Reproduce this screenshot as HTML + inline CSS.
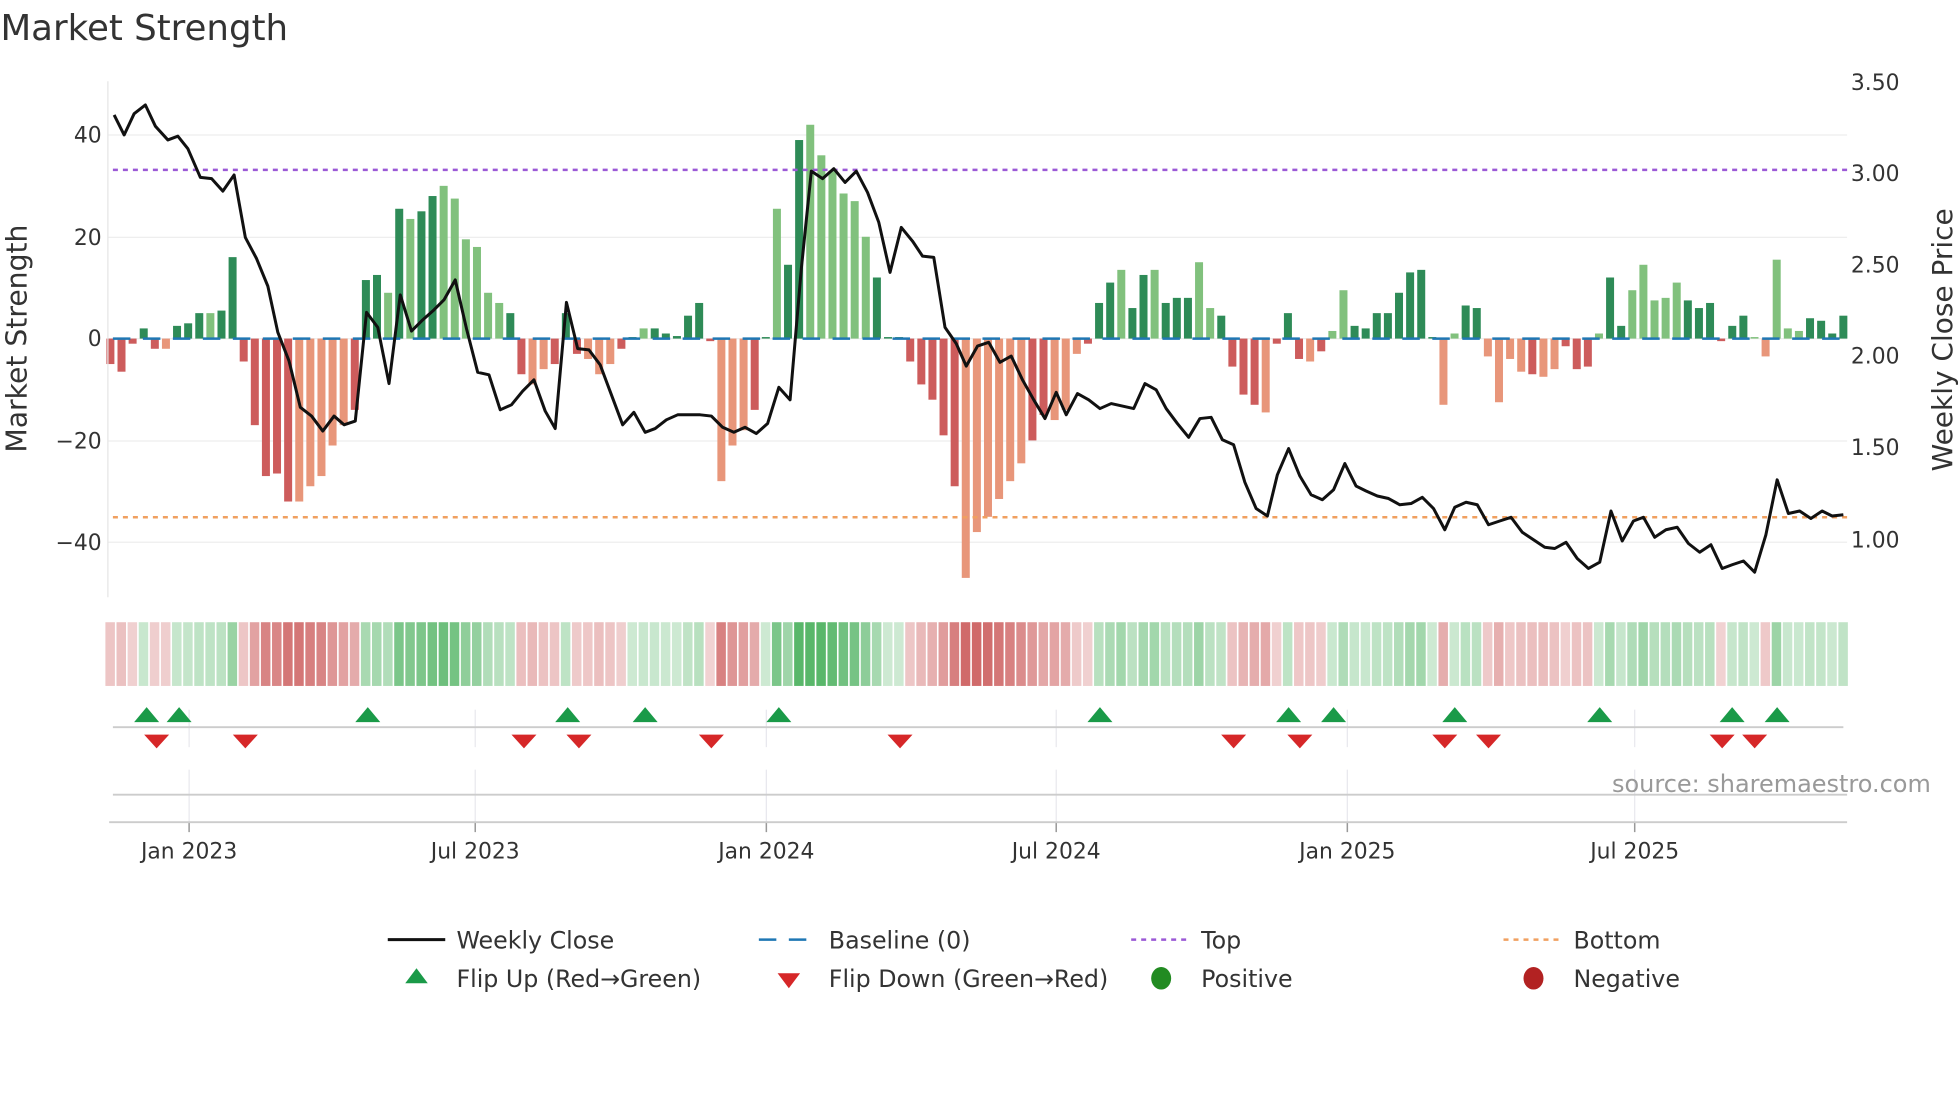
<!DOCTYPE html>
<html><head><meta charset="utf-8"><style>
html,body{margin:0;padding:0;background:#fff;overflow:hidden}
svg{display:block}
text{font-family:"DejaVu Sans","Liberation Sans",sans-serif;fill:#333}
</style></head><body>
<svg id="s" width="1960" height="1102" viewBox="0 0 1568 882" xmlns="http://www.w3.org/2000/svg">
<text x="0" y="32" font-size="28.5">Market Strength</text>
<g id="grid"></g>
<g id="bars"></g>
<line x1="90" y1="271" x2="1478" y2="271" stroke="#1f77b4" stroke-width="2" stroke-dasharray="14,10"/>
<line x1="90" y1="136" x2="1478" y2="136" stroke="#9b59d6" stroke-width="2" stroke-dasharray="4,4"/>
<line x1="90" y1="414" x2="1478" y2="414" stroke="#f0a060" stroke-width="2" stroke-dasharray="4,4"/>
<polyline id="price" fill="none" stroke="#111" stroke-width="2.4" stroke-linejoin="round"/>
<g id="heat"></g>
<g id="marks"></g>
<line x1="86" y1="65" x2="86" y2="478" stroke="#e6e6e6" stroke-width="1"/>
<g font-size="17.5" text-anchor="end">
<text x="81" y="114">40</text><text x="81" y="196">20</text><text x="81" y="277">0</text><text x="81" y="359">−20</text><text x="81" y="440">−40</text>
</g>
<g font-size="17.5">
<text x="1481" y="72">3.50</text><text x="1481" y="145">3.00</text><text x="1481" y="218">2.50</text><text x="1481" y="291">2.00</text><text x="1481" y="364">1.50</text><text x="1481" y="438">1.00</text>
</g>
<text transform="translate(21,271) rotate(-90)" font-size="22.6" text-anchor="middle">Market Strength</text>
<text transform="translate(1562,272) rotate(-90)" font-size="22.4" text-anchor="middle">Weekly Close Price</text>
<line x1="90" y1="582" x2="1475" y2="582" stroke="#ccc" stroke-width="1.5"/>
<line x1="90" y1="636" x2="1478" y2="636" stroke="#ccc" stroke-width="1.5"/>
<line x1="87" y1="658" x2="1478" y2="658" stroke="#ccc" stroke-width="1.5"/>
<g id="ticks" font-size="17.5" text-anchor="middle"></g>
<text x="1545" y="634" font-size="19.2" text-anchor="end" style="fill:#999">source: sharemaestro.com</text>
<g font-size="19">
<line x1="310" y1="752" x2="356" y2="752" stroke="#111" stroke-width="2.4"/><text x="365" y="759">Weekly Close</text>
<line x1="607" y1="752" x2="651" y2="752" stroke="#1f77b4" stroke-width="2" stroke-dasharray="14,10"/><text x="663" y="759">Baseline (0)</text>
<line x1="905" y1="752" x2="949" y2="752" stroke="#9b59d6" stroke-width="2" stroke-dasharray="4,4"/><text x="961" y="759">Top</text>
<line x1="1203" y1="752" x2="1247" y2="752" stroke="#f0a060" stroke-width="2" stroke-dasharray="4,4"/><text x="1259" y="759">Bottom</text>
<polygon points="324,787 342,787 333,775" fill="#1a9a48"/><text x="365" y="790">Flip Up (Red→Green)</text>
<polygon points="622,779 640,779 631,791" fill="#d62728"/><text x="663" y="790">Flip Down (Green→Red)</text>
<ellipse cx="929" cy="783" rx="8" ry="9" fill="#228b22"/><text x="961" y="790">Positive</text>
<ellipse cx="1227" cy="783" rx="8" ry="9" fill="#b22222"/><text x="1259" y="790">Negative</text>
</g>
</svg>
<script>
var NS="http://www.w3.org/2000/svg";
function el(t,a,p){var e=document.createElementNS(NS,t);for(var k in a)e.setAttribute(k,a[k]);document.getElementById(p).appendChild(e);return e;}
[108,190,271,353,434].forEach(function(y){el("line",{x1:86,y1:y,x2:1478,y2:y,stroke:"#eeeeee","stroke-width":1},"grid");});
var ticks=[[151,"Jan 2023"],[380,"Jul 2023"],[613,"Jan 2024"],[845,"Jul 2024"],[1078,"Jan 2025"],[1308,"Jul 2025"]];
ticks.forEach(function(t){
 el("line",{x1:t[0],y1:568,x2:t[0],y2:598,stroke:"#e8e8ee","stroke-width":1},"grid");
 el("line",{x1:t[0],y1:616,x2:t[0],y2:658,stroke:"#e8e8ee","stroke-width":1},"grid");
 el("line",{x1:t[0],y1:658,x2:t[0],y2:666,stroke:"#999","stroke-width":1.2},"grid");
 var tx=el("text",{x:t[0],y:687},"ticks");tx.textContent=t[1];
});
var v=[-5,-6.5,-1,2,-2,-2,2.5,3,5,5,5.5,16,-4.5,-17,-27,-26.5,-32,-32,-29,-27,-21,-17,-14,11.5,12.5,9,25.5,23.5,25,28,30,27.5,19.5,18,9,7,5,-7,-9,-6,-5,5,-3,-4,-7,-5,-2,0.3,2,2,1,0.5,4.5,7,-0.5,-28,-21,-18,-14,0.3,25.5,14.5,39,42,36,33,28.5,27,20,12,0.3,0.3,-4.5,-9,-12,-19,-29,-47,-38,-35,-31.5,-28,-24.5,-20,-15,-16,-14,-3,-1,7,11,13.5,6,12.5,13.5,7,8,8,15,6,4.5,-5.5,-11,-13,-14.5,-1,5,-4,-4.5,-2.5,1.5,9.5,2.5,2,5,5,9,13,13.5,0.3,-13,1,6.5,6,-3.5,-12.5,-4,-6.5,-7,-7.5,-6,-1.5,-6,-5.5,1,12,2.5,9.5,14.5,7.5,8,11,7.5,6,7,-0.5,2.5,4.5,0.3,-3.5,15.5,2,1.5,4,3.5,1,4.5];
var L="DDDDDLDDDLDDDDDDDLLLLLDDDLDLDDLLLLLLDDLLDDDLLLDDLDDDDDDLLLDDLDDLLLLLLDDDDDDDDLLLLLLDDLLLDDDLDDLDDDLLDDDDLDDDLDLLDDDDDDDDLLDDLLLLDLLDDDLDDLLLLLDDDDDDLLLLLD";
var n=v.length,dx=(1475-88)/(n-1);
for(var i=0;i<n;i++){
 var x=88+i*dx,val=v[i],lt=L[i]==="L",y0=271,h=val*4.075;
 var col=val>=0?(lt?"#81c17d":"#2e8b57"):(lt?"#e8967a":"#cd5c5c");
 el("rect",{x:x-3.2,y:val>=0?y0-h:y0,width:6.4,height:Math.abs(h),fill:col},"bars");
 var a=Math.min(0.85,0.25+Math.abs(val)/45*0.75);
 var hc=val>=0?"rgba(60,170,80,"+a+")":"rgba(200,80,80,"+a+")";
 el("rect",{x:x-4,y:498,width:7.6,height:51,fill:hc},"heat");
}
var p=[91,92,99,108,107,91,116,84,124,101,134,112,142,109,150,119,160,142,169,143,178,153,187,140,196,190,205,207,214,229,222,266,231,289,240,326,249,333,258,345,267,333,275,340,284,337,293,250,302,262,311,307,320,236,329,265,338,256,347,248,355,240,364,224,373,263,382,298,391,300,400,328,409,324,418,313,427,304,436,329,444,343,453,242,462,279,471,280,480,292,489,316,498,340,507,330,516,346,524,343,533,336,542,332,551,332,560,332,569,333,578,342,587,346,596,342,605,347,614,339,623,310,632,320,641,215,649,137,658,143,667,135,676,146,685,137,694,154,703,178,712,218,721,182,730,193,738,205,747,206,756,262,765,275,773,293,782,277,791,274,800,290,809,285,818,304,827,320,836,335,845,314,853,332,862,315,871,320,880,327,889,323,898,325,907,327,916,307,925,312,933,327,942,339,951,350,960,335,969,334,978,352,987,356,996,386,1005,407,1014,413,1022,380,1031,359,1040,381,1049,396,1058,400,1067,392,1076,371,1085,389,1093,393,1102,397,1111,399,1120,404,1129,403,1138,398,1147,407,1156,424,1164,406,1173,402,1182,404,1191,420,1200,417,1209,414,1218,426,1227,432,1236,438,1244,439,1253,434,1262,447,1271,455,1280,450,1289,409,1298,433,1307,417,1315,414,1324,430,1333,424,1342,422,1351,435,1360,442,1369,436,1378,455,1386,452,1395,449,1404,458,1413,428,1422,384,1431,411,1440,409,1449,415,1458,409,1466,413,1475,412];
var s="";for(var j=0;j<p.length;j+=2)s+=p[j]+","+p[j+1]+" ";
document.getElementById("price").setAttribute("points",s);
[117,143,294,454,516,623,880,1031,1067,1164,1280,1386,1422].forEach(function(x){el("polygon",{points:(x-10)+",578 "+(x+10)+",578 "+x+",566",fill:"#1a9a48"},"marks");});
[125,196,419,463,569,720,987,1040,1156,1191,1378,1404].forEach(function(x){el("polygon",{points:(x-10)+",588 "+(x+10)+",588 "+x+",599",fill:"#d62728"},"marks");});
</script>
</body></html>
